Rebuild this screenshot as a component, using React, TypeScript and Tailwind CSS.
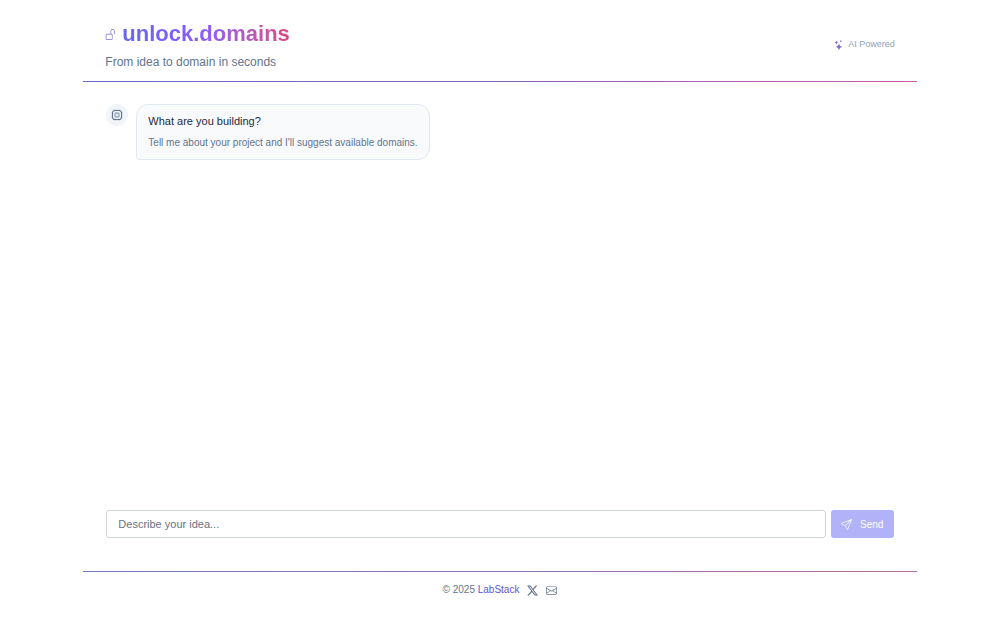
import { ChangeEvent, FormEvent, useState } from "react";
import { BsEnvelope, BsSend, BsStars, BsTwitterX, BsUnlock } from "react-icons/bs";

const ChipIcon = () => (
    <svg viewBox="0 0 16 16" className="size-3" fill="none" stroke="currentColor" aria-hidden="true">
        <rect x="2" y="2" width="12" height="12" rx="3.4" strokeWidth="1.4" />
        <rect x="5.4" y="5.4" width="5.2" height="5.2" rx="0.6" strokeWidth="1.2" />
        <path d="M5 .6v1.4M8 .6v1.4M11 .6v1.4M5 14v1.4M8 14v1.4M11 14v1.4M.6 5H2M.6 8H2M.6 11H2M14 5h1.4M14 8h1.4M14 11h1.4" strokeWidth="0.7" />
    </svg>
);

const Header = () => {
    return (
        <header>
            <div className="flex items-center justify-between px-[22px] pt-[19px] pb-[10px]">
                <div>
                    <div className="flex items-center gap-1.5">
                        <BsUnlock size={11} className="text-[#7c6fd0]" />
                        <h1 className="bg-linear-to-r from-[#6366f1] via-[#8b5cf6] to-[#e0457f] bg-clip-text text-[22px] leading-[30px] font-bold text-transparent">
                            unlock.domains
                        </h1>
                    </div>
                    <p className="mt-1 text-[12px] leading-[18px] text-slate-500">From idea to domain in seconds</p>
                </div>
                <div className="flex items-center gap-1 text-[9px] text-slate-400">
                    <BsStars size={10} className="text-[#7c6fd0]" />
                    <span>AI Powered</span>
                </div>
            </div>
            <div className="h-px bg-linear-to-r from-[#6669cc] via-[#8a62bc] to-[#c858a0]" />
        </header>
    );
};

const Message = () => {
    return (
        <div className="flex items-start gap-2">
            <div className="flex size-[22px] shrink-0 items-center justify-center rounded-full bg-slate-100 text-slate-500">
                <ChipIcon />
            </div>
            <div className="rounded-xl rounded-bl-sm border border-slate-200 bg-slate-50 px-[11px] py-2">
                <p className="text-[11px] leading-4 text-slate-800">What are you building?</p>
                <p className="mt-[6px] text-[10px] leading-4 text-slate-500">
                    Tell me about your project and I'll suggest available domains.
                </p>
            </div>
        </div>
    );
};

const App = () => {
    const [idea, setIdea] = useState("");

    const handleChange = (e: ChangeEvent<HTMLInputElement>) => {
        setIdea(e.target.value);
    };

    const handleSubmit = (e: FormEvent<HTMLFormElement>) => {
        e.preventDefault();
        setIdea("");
    };

    return (
        <div className="min-h-screen bg-white font-['Liberation_Sans',Arial,sans-serif]">
            <div className="mx-auto flex min-h-screen w-5/6 flex-col">
                <Header />

                <main className="flex flex-1 flex-col px-[23px] pt-[22px] pb-[33px]">
                    <div className="flex-1">
                        <Message />
                    </div>
                    <form onSubmit={handleSubmit} className="flex gap-[5px]">
                        <input
                            type="text"
                            aria-label="Describe your idea"
                            placeholder="Describe your idea..."
                            value={idea}
                            onChange={handleChange}
                            className="h-7 min-w-0 flex-1 rounded-[3px] border border-gray-300 px-[11px] text-[11px] text-slate-800 placeholder:text-gray-500 focus:border-indigo-400 focus:outline-none"
                        />
                        <button
                            type="submit"
                            disabled={!idea.trim()}
                            className="flex h-7 w-[63px] items-center justify-center gap-2 rounded-[3px] bg-[#6366f1] text-[10px] text-white disabled:bg-[#b1b2f8]"
                        >
                            <BsSend size={11} />
                            Send
                        </button>
                    </form>
                </main>

                <footer>
                    <div className="h-px bg-linear-to-r from-[#7477c4] via-[#8f72b4] to-[#b8709c]" />
                    <div className="flex items-center justify-center gap-2 pt-2.5 pb-[27px] text-[10px] leading-4 text-slate-500">
                        <span>
                            © 2025{" "}
                            <a href="#labstack" className="text-[#5f56cf]">
                                LabStack
                            </a>
                        </span>
                        <a href="#x" aria-label="X">
                            <BsTwitterX size={11} />
                        </a>
                        <a href="#contact" aria-label="Email">
                            <BsEnvelope size={11} />
                        </a>
                    </div>
                </footer>
            </div>
        </div>
    );
};

export default App;
